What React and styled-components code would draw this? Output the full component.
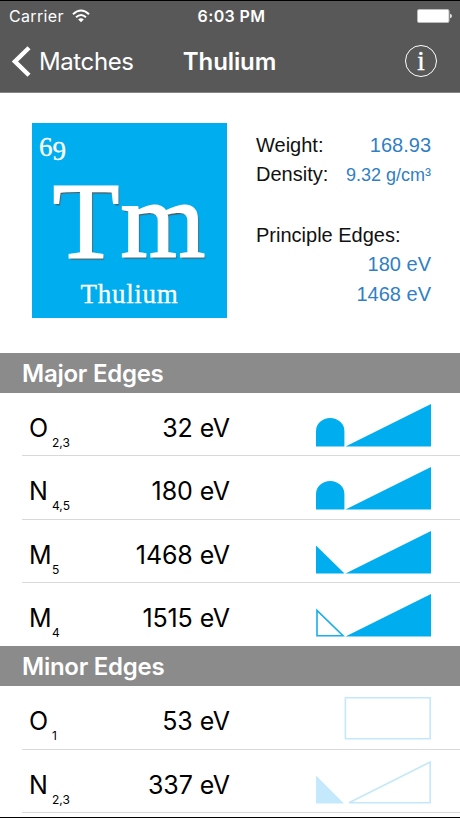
import React from "react";
import styled, { createGlobalStyle } from "styled-components";

const element = {
  number: "69",
  symbol: "Tm",
  name: "Thulium",
  weight: "168.93",
  density: "9.32 g/cm³",
  principleEdges: ["180 eV", "1468 eV"],
};

const majorEdges = [
  { shell: "O", sub: "2,3", energy: "32 eV", shape: "dome" },
  { shell: "N", sub: "4,5", energy: "180 eV", shape: "dome" },
  { shell: "M", sub: "5", energy: "1468 eV", shape: "spike" },
  { shell: "M", sub: "4", energy: "1515 eV", shape: "hollowSpike" },
];

const minorEdges = [
  { shell: "O", sub: "1", energy: "53 eV", shape: "box" },
  { shell: "N", sub: "2,3", energy: "337 eV", shape: "faintSpike" },
];

const EdgeShape = ({ shape }) => (
  <Shape viewBox="0 0 116 44">
    {shape === "dome" && (
      <path d="M1 43.5V28A14.2 13 0 0 1 29.4 28V43.5Z" fill="#00adee" />
    )}
    {shape === "spike" && <path d="M1 43.5V15.5L29.5 43.5Z" fill="#00adee" />}
    {shape === "hollowSpike" && (
      <path d="M2 42.8V17.5L28 42.8Z" fill="none" stroke="#16aeeb" strokeWidth="1.6" />
    )}
    {["dome", "spike", "hollowSpike"].includes(shape) && (
      <path d="M30.5 43.5L116 1V43.5Z" fill="#00adee" />
    )}
    {shape === "box" && (
      <path d="M30.4 1.7H115.2V42.8H30.4Z" fill="none" stroke="#c3e8fb" strokeWidth="1.6" />
    )}
    {shape === "faintSpike" && (
      <>
        <path d="M1 43.5V15.5L29 43.5Z" fill="#c5e9fc" />
        <path d="M34 42.8L115.2 2V42.8Z" fill="none" stroke="#c3e8fb" strokeWidth="1.6" />
      </>
    )}
  </Shape>
);

const EdgeList = ({ title, edges, lastDivider }) => (
  <section>
    <SectionTitle>{title}</SectionTitle>
    <ul>
      {edges.map((edge, i) => (
        <EdgeRow
          key={edge.shell + edge.sub}
          $divider={lastDivider || i < edges.length - 1}
        >
          <Shell>{edge.shell}</Shell>
          <Subscript>{edge.sub}</Subscript>
          <Energy>{edge.energy}</Energy>
          <EdgeShape shape={edge.shape} />
        </EdgeRow>
      ))}
    </ul>
  </section>
);

const App = () => {
  return (
    <Screen>
      <GlobalStyle />
      <Header>
        <StatusBar>
          <Carrier>
            Carrier
            <svg width="18" height="14" viewBox="0 0 18 14">
              <g fill="none" stroke="#fff" strokeWidth="2">
                <path d="M1 5.2Q9-2.2 17 5.2" />
                <path d="M4 8.3Q9 3.8 14 8.3" />
              </g>
              <path d="M6.2 10.4Q9 8 11.8 10.4L9 13.2Z" fill="#fff" />
            </svg>
          </Carrier>
          <Time>6:03 PM</Time>
          <Battery>
            <svg width="35" height="14" viewBox="0 0 35 14">
              <rect x="0.5" y="0.5" width="31.5" height="13" rx="1.5" fill="#fff" stroke="#bbb" />
              <path d="M33 4.7Q35 5.2 35 7T33 9.3Z" fill="#ddd" />
            </svg>
          </Battery>
        </StatusBar>
        <NavBar>
          <BackButton>
            <svg width="19" height="31" viewBox="0 0 19 31">
              <path d="M17 1.8L3 15.5L17 29.2" fill="none" stroke="#fff" strokeWidth="4.4" />
            </svg>
            Matches
          </BackButton>
          <Title>{element.name}</Title>
          <InfoButton>i</InfoButton>
        </NavBar>
      </Header>
      <Summary>
        <Tile>
          <AtomicNumber>
            6<Lowered>9</Lowered>
          </AtomicNumber>
          <Symbol>{element.symbol}</Symbol>
          <TileName>{element.name}</TileName>
        </Tile>
        <Facts>
          <Fact>
            <FactLabel>Weight:</FactLabel>
            <Value>{element.weight}</Value>
          </Fact>
          <Fact>
            <FactLabel>Density:</FactLabel>
            <Value $small>{element.density}</Value>
          </Fact>
          <EdgesLabel>Principle Edges:</EdgesLabel>
          {element.principleEdges.map((edge) => (
            <PrincipleEdge key={edge}>{edge}</PrincipleEdge>
          ))}
        </Facts>
      </Summary>
      <EdgeList title="Major Edges" edges={majorEdges} />
      <EdgeList title="Minor Edges" edges={minorEdges} lastDivider />
    </Screen>
  );
};

export default App;

const GlobalStyle = createGlobalStyle`
  * {
    box-sizing: border-box;
    margin: 0;
    padding: 0;
  }
  body {
    background-color: #fff;
    font-family: Inter, "Liberation Sans", sans-serif;
  }
  ul {
    list-style: none;
  }
  svg {
    display: block;
    flex-shrink: 0;
  }
`;

const Screen = styled.main`
  width: 460px;
  height: 818px;
  overflow: hidden;
  background-color: #fff;
  border-bottom: 1px solid #000;
`;

const Header = styled.header`
  height: 93px;
  background-color: #585858;
  border-top: 1px solid #000;
  border-bottom: 1px solid #858585;
  color: #fff;
`;

const StatusBar = styled.div`
  display: grid;
  grid-template-columns: 1fr auto 1fr;
  align-items: center;
  height: 30px;
  padding: 0 8px 0 9px;
`;

const Carrier = styled.div`
  display: flex;
  align-items: center;
  gap: 8px;
  font-size: 16px;
  letter-spacing: 0.35px;
`;

const Time = styled.time`
  padding-left: 2px;
  font-size: 16px;
  font-weight: 600;
  letter-spacing: 0.4px;
`;

const Battery = styled.div`
  justify-self: end;
`;

const NavBar = styled.nav`
  display: grid;
  grid-template-columns: 1fr auto 1fr;
  align-items: center;
  height: 60px;
  padding: 0 23px 0 12px;
`;

const BackButton = styled.button`
  display: flex;
  align-items: center;
  gap: 8px;
  border: none;
  background: none;
  color: #fff;
  font-family: inherit;
  font-size: 24px;
  letter-spacing: -0.4px;
`;

const Title = styled.h1`
  padding-left: 10px;
  font-size: 24px;
  font-weight: 600;
  letter-spacing: -0.1px;
`;

const InfoButton = styled.button`
  justify-self: end;
  width: 32px;
  height: 32px;
  border: 1.5px solid #fff;
  border-radius: 50%;
  background: none;
  color: #fff;
  font-family: "Liberation Serif", serif;
  font-size: 27px;
  line-height: 27px;
  -webkit-text-stroke: 0.4px #fff;
`;

const Summary = styled.section`
  display: flex;
  justify-content: space-between;
  height: 260px;
  padding: 30px 29px 0 32px;
`;

const Tile = styled.div`
  display: flex;
  flex-direction: column;
  width: 195px;
  height: 195px;
  background-color: #00adee;
  color: #fff;
  font-family: "Liberation Serif", serif;
`;

const AtomicNumber = styled.span`
  display: flex;
  height: 46px;
  padding: 10px 0 0 7px;
  font-size: 27px;
  line-height: 28px;
  -webkit-text-stroke: 0.3px #fff;
`;

const Lowered = styled.span`
  margin-top: 4px;
`;

const Symbol = styled.span`
  height: 106px;
  font-size: 109px;
  line-height: 104px;
  text-align: center;
  letter-spacing: 1px;
  -webkit-text-stroke: 1.8px #fff;
  text-shadow: 1.5px 1.5px 1px #555;
`;

const TileName = styled.span`
  font-size: 27px;
  line-height: 38px;
  text-align: center;
  letter-spacing: 0.7px;
  -webkit-text-stroke: 0.3px #fff;
`;

const Facts = styled.div`
  width: 175px;
  padding-top: 8px;
  font-family: "Liberation Sans", sans-serif;
  font-size: 20px;
  line-height: 29px;
`;

const Fact = styled.div`
  display: flex;
  align-items: baseline;
  justify-content: space-between;
`;

const FactLabel = styled.span`
  color: #111;
`;

const Value = styled.span`
  color: #317fc4;
  font-size: ${({ $small }) => ($small ? "18px" : "20px")};
`;

const EdgesLabel = styled.h3`
  margin-top: 31px;
  color: #111;
  font-size: 20px;
  font-weight: normal;
`;

const PrincipleEdge = styled.div`
  height: 30px;
  color: #317fc4;
  text-align: right;
`;

const SectionTitle = styled.h2`
  height: 40.3px;
  padding-left: 22px;
  background-color: #8b8b8b;
  color: #fff;
  font-size: 24px;
  font-weight: 600;
  line-height: 42px;
  letter-spacing: -0.25px;
`;

const EdgeRow = styled.li`
  display: grid;
  grid-template-columns: 23px 63px 122px 1fr;
  height: 63.2px;
  margin-left: 22px;
  padding: 10px 29px 0 7px;
  border-bottom: 1px solid ${({ $divider }) => ($divider ? "#d9d9d9" : "#fff")};
`;

const Shell = styled.span`
  font-size: 25px;
  line-height: 50px;
`;

const Subscript = styled.sub`
  padding-top: 15px;
  font-size: 12px;
  line-height: 50px;
`;

const Energy = styled.span`
  padding-right: 7px;
  font-size: 25px;
  line-height: 50px;
  text-align: right;
  white-space: nowrap;
  letter-spacing: -0.1px;
`;

const Shape = styled.svg`
  justify-self: end;
  width: 116px;
  height: 44px;
`;
